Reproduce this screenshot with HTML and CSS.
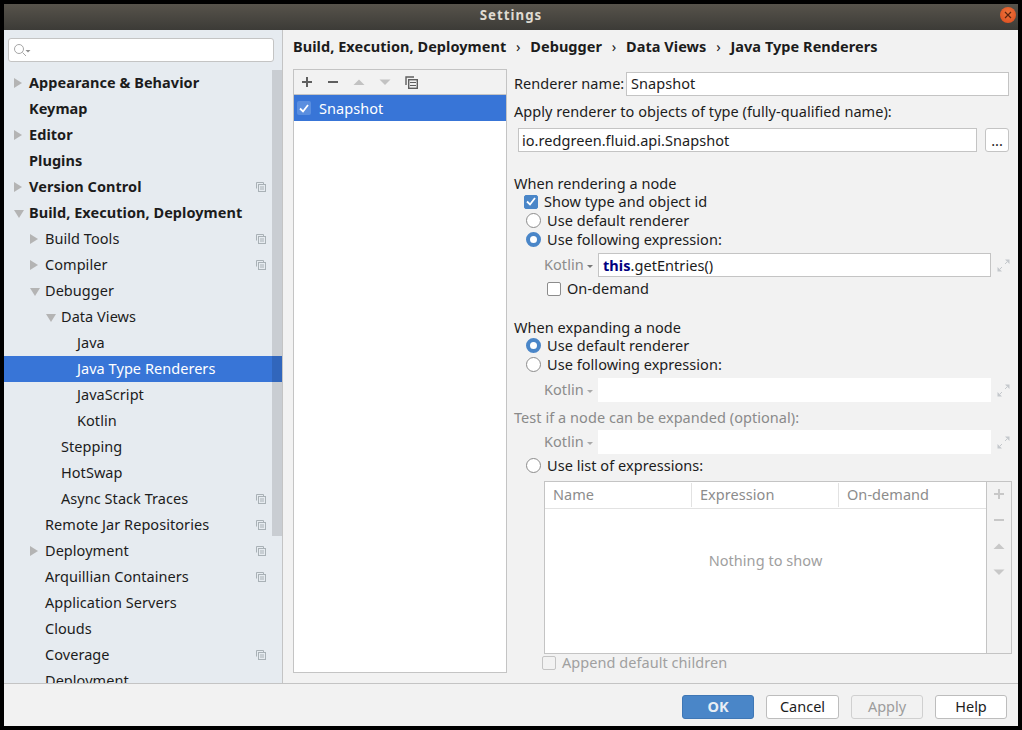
FILE: index.html
```html
<!DOCTYPE html>
<html lang="en">
<head>
    <meta charset="UTF-8">
    <meta name="viewport" content="width=device-width, initial-scale=1.0">
    <title>Settings</title>
    <link rel="stylesheet" href="styles.css">
</head>
<body>
    <svg class="defs" width="0" height="0">
        <symbol id="copy" viewBox="0 0 10 10">
            <path d="M0.5 6.5V0.5H7.5V2" fill="none" stroke="currentColor"/>
            <rect x="2.5" y="2.5" width="7" height="7" fill="none" stroke="currentColor"/>
            <path d="M4 5H8M4 7H8" stroke="currentColor"/>
        </symbol>
        <symbol id="expand" viewBox="0 0 13 13">
            <path d="M8 0.5H12.5V5Z M0.5 8V12.5H5Z" fill="currentColor"/>
            <path d="M8 5L10 3M3 10L5 8" stroke="currentColor"/>
        </symbol>
    </svg>

    <div class="window">
        <div class="titlebar">
            <span class="title">Settings</span>
            <span class="close">
                <svg width="8" height="8" viewBox="0 0 8 8"><path d="M1 1L7 7M7 1L1 7" stroke="#5a2410" stroke-width="1.2"/></svg>
            </span>
        </div>

        <div class="main">
            <!-- left settings tree -->
            <div class="sidebar">
                <div class="search">
                    <svg width="20" height="14" viewBox="0 0 20 14">
                        <circle cx="5" cy="5" r="4.5" fill="none" stroke="#a6a6a6"/>
                        <path d="M8.5 8.5L12 12" stroke="#a6a6a6"/>
                        <path d="M11.5 6H16.5L14 8.5Z" fill="#909090"/>
                    </svg>
                </div>
                <div class="tree">
                    <div class="row lv0 bold"><i class="arrow"></i>Appearance &amp; Behavior</div>
                    <div class="row lv0 bold">Keymap</div>
                    <div class="row lv0 bold"><i class="arrow"></i>Editor</div>
                    <div class="row lv0 bold">Plugins</div>
                    <div class="row lv0 bold"><i class="arrow"></i>Version Control<svg class="copy"><use href="#copy"/></svg></div>
                    <div class="row lv0 bold"><i class="arrow open"></i>Build, Execution, Deployment</div>
                    <div class="row lv1"><i class="arrow"></i>Build Tools<svg class="copy"><use href="#copy"/></svg></div>
                    <div class="row lv1"><i class="arrow"></i>Compiler<svg class="copy"><use href="#copy"/></svg></div>
                    <div class="row lv1"><i class="arrow open"></i>Debugger</div>
                    <div class="row lv2"><i class="arrow open"></i>Data Views</div>
                    <div class="row lv3">Java</div>
                    <div class="row lv3 selected">Java Type Renderers</div>
                    <div class="row lv3">JavaScript</div>
                    <div class="row lv3">Kotlin</div>
                    <div class="row lv2">Stepping</div>
                    <div class="row lv2">HotSwap</div>
                    <div class="row lv2">Async Stack Traces<svg class="copy"><use href="#copy"/></svg></div>
                    <div class="row lv1">Remote Jar Repositories<svg class="copy"><use href="#copy"/></svg></div>
                    <div class="row lv1"><i class="arrow"></i>Deployment<svg class="copy"><use href="#copy"/></svg></div>
                    <div class="row lv1">Arquillian Containers<svg class="copy"><use href="#copy"/></svg></div>
                    <div class="row lv1">Application Servers</div>
                    <div class="row lv1">Clouds</div>
                    <div class="row lv1">Coverage<svg class="copy"><use href="#copy"/></svg></div>
                    <div class="row lv1">Deployment</div>
                </div>
                <div class="scrollbar"></div>
            </div>

            <div class="content">
                <div class="breadcrumb">
                    <span>Build, Execution, Deployment</span><b class="sep">›</b><span>Debugger</span><b class="sep">›</b><span>Data Views</span><b class="sep">›</b><span>Java Type Renderers</span>
                </div>

                <div class="panels">
                    <!-- renderer list -->
                    <div class="list-panel">
                        <div class="list-toolbar">
                            <svg width="12" height="12" viewBox="0 0 12 12"><path d="M6 1V11M1 6H11" stroke="#5f5f5f" stroke-width="2"/></svg>
                            <svg width="12" height="12" viewBox="0 0 12 12"><path d="M1 6H11" stroke="#5f5f5f" stroke-width="2"/></svg>
                            <svg width="12" height="12" viewBox="0 0 12 12"><path d="M0.5 9L6 3.5L11.5 9Z" fill="#c2c2c2"/></svg>
                            <svg width="12" height="12" viewBox="0 0 12 12"><path d="M0.5 3.5L6 9L11.5 3.5Z" fill="#c2c2c2"/></svg>
                            <svg width="13" height="13" viewBox="0 0 13 13">
                                <path d="M1 9V1H9" fill="none" stroke="#5f5f5f" stroke-width="1.4"/>
                                <rect x="3.7" y="3.7" width="8.6" height="8.6" fill="none" stroke="#5f5f5f" stroke-width="1.4"/>
                                <path d="M5 6.5H11M5 9.5H11" stroke="#5f5f5f" stroke-width="1.2"/>
                            </svg>
                        </div>
                        <div class="list-item">
                            <span class="list-check">
                                <svg width="10" height="9" viewBox="0 0 10 9"><path d="M1 4.5L4 7.5L9 1" fill="none" stroke="#fff" stroke-width="1.8"/></svg>
                            </span>
                            Snapshot
                        </div>
                    </div>

                    <!-- renderer form -->
                    <div class="form">
                        <div class="name-row">
                            <label>Renderer name:</label>
                            <div class="input grow">Snapshot</div>
                        </div>
                        <div class="line apply-label">Apply renderer to objects of type (fully-qualified name):</div>
                        <div class="type-row">
                            <div class="input grow">io.redgreen.fluid.api.Snapshot</div>
                            <button class="dots">...</button>
                        </div>

                        <div class="line heading first-heading">When rendering a node</div>
                        <div class="opt box-opt"><i class="box checked"><svg width="10" height="9" viewBox="0 0 10 9"><path d="M1 4.5L4 7.5L9 1" fill="none" stroke="#fff" stroke-width="1.8"/></svg></i>Show type and object id</div>
                        <div class="opt radio-opt"><i class="radio"></i>Use default renderer</div>
                        <div class="opt radio-opt"><i class="radio on"></i>Use following expression:</div>
                        <div class="expr-row">
                            <span class="lang">Kotlin<i class="caret"></i></span>
                            <div class="input grow code"><b>this</b>.getEntries()</div>
                            <svg class="expand"><use href="#expand"/></svg>
                        </div>
                        <div class="opt demand-opt"><i class="box"></i>On-demand</div>

                        <div class="line heading second-heading">When expanding a node</div>
                        <div class="opt radio-opt"><i class="radio on"></i>Use default renderer</div>
                        <div class="opt radio-opt"><i class="radio"></i>Use following expression:</div>
                        <div class="expr-row">
                            <span class="lang off">Kotlin<i class="caret"></i></span>
                            <div class="input grow blank"></div>
                            <svg class="expand"><use href="#expand"/></svg>
                        </div>
                        <div class="line test-label">Test if a node can be expanded (optional):</div>
                        <div class="expr-row tight">
                            <span class="lang off">Kotlin<i class="caret"></i></span>
                            <div class="input grow blank"></div>
                            <svg class="expand"><use href="#expand"/></svg>
                        </div>
                        <div class="opt radio-opt list-opt"><i class="radio"></i>Use list of expressions:</div>

                        <div class="expr-table">
                            <div class="table-main">
                                <div class="table-head">
                                    <span>Name</span><span>Expression</span><span>On-demand</span>
                                </div>
                                <div class="table-empty">Nothing to show</div>
                            </div>
                            <div class="table-tools">
                                <svg width="12" height="12" viewBox="0 0 12 12"><path d="M6 1V11M1 6H11" stroke="#c8c8c8" stroke-width="2"/></svg>
                                <svg width="12" height="12" viewBox="0 0 12 12"><path d="M1 6H11" stroke="#c8c8c8" stroke-width="2"/></svg>
                                <svg width="12" height="12" viewBox="0 0 12 12"><path d="M0.5 9L6 3.5L11.5 9Z" fill="#c8c8c8"/></svg>
                                <svg width="12" height="12" viewBox="0 0 12 12"><path d="M0.5 3.5L6 9L11.5 3.5Z" fill="#c8c8c8"/></svg>
                            </div>
                        </div>
                        <div class="opt append-opt"><i class="box off"></i>Append default children</div>
                    </div>
                </div>
            </div>
        </div>

        <div class="footer">
            <button class="btn primary">OK</button>
            <button class="btn wide">Cancel</button>
            <button class="btn disabled">Apply</button>
            <button class="btn">Help</button>
        </div>
    </div>
</body>
</html>
```

FILE: styles.css
```css
* {
    box-sizing: border-box;
}
html, body {
    margin: 0;
    height: 100%;
}
body {
    padding: 4px;
    background-color: #000;
    font-family: "Noto Sans", "Open Sans", sans-serif;
    font-size: 14.5px;
    letter-spacing: 0.05px;
    color: #1c1c1c;
    overflow: hidden;
}
.defs {
    position: absolute;
}
i {
    font-style: normal;
}
.window {
    display: flex;
    flex-direction: column;
    height: 722px;
    background-color: #f2f2f2;
}

/* title bar */
.titlebar {
    position: relative;
    flex: none;
    height: 26px;
    padding-bottom: 4px;
    display: flex;
    align-items: center;
    justify-content: center;
    background: linear-gradient(#57534b, #3c3b37);
}
.title {
    color: #dfdbd2;
    font-weight: 700;
    font-size: 13.3px;
    letter-spacing: 1px;
}
.close {
    position: absolute;
    right: 2px;
    top: 3px;
    width: 16px;
    height: 16px;
    border-radius: 50%;
    background: radial-gradient(circle at 50% 40%, #f0763c, #d9481c);
    display: flex;
    align-items: center;
    justify-content: center;
}

.main {
    flex: 1;
    display: flex;
    min-height: 0;
}

/* settings tree */
.sidebar {
    position: relative;
    flex: none;
    width: 279px;
    background-color: #e6ebf0;
    border-right: 1px solid #c4c4c4;
    overflow: hidden;
}
.search {
    margin: 8px 8px 8px 4px;
    height: 24px;
    background: #fff;
    border: 1px solid #c4c4c4;
    border-radius: 3px;
    padding: 5px 0 0 5px;
    line-height: 0;
}
.tree {
    height: 613px;
    overflow: hidden;
}
.row {
    position: relative;
    height: 26px;
    line-height: 24px;
    white-space: nowrap;
}
.bold {
    font-weight: 700;
}
.lv0 { padding-left: 25px; }
.lv1 { padding-left: 41px; }
.lv2 { padding-left: 57px; }
.lv3 { padding-left: 73px; }
.selected {
    background-color: #3875d7;
    color: #fff;
}
.arrow {
    position: absolute;
    top: 8px;
    margin-left: -15px;
    width: 0;
    height: 0;
    border-left: 8px solid #b4b4b4;
    border-top: 5px solid transparent;
    border-bottom: 5px solid transparent;
}
.arrow.open {
    top: 10px;
    border-top: 8px solid #b4b4b4;
    border-left: 5px solid transparent;
    border-right: 5px solid transparent;
    border-bottom: 0;
}
.copy {
    position: absolute;
    left: 252px;
    top: 8px;
    width: 10px;
    height: 10px;
    color: #a9b1b6;
}
.scrollbar {
    position: absolute;
    right: 0;
    top: 40px;
    width: 10px;
    height: 466px;
    background-color: rgba(0, 0, 0, 0.125);
}

/* right side */
.content {
    flex: 1;
    min-width: 0;
    padding-left: 10px;
}
.breadcrumb {
    height: 39px;
    padding-top: 3px;
    line-height: 26px;
    font-weight: 700;
    white-space: nowrap;
}
.sep {
    display: inline-block;
    width: 24px;
    text-align: center;
    font-weight: 400;
}
.panels {
    display: flex;
}
.list-panel {
    flex: none;
    width: 214px;
    height: 604px;
    background-color: #fff;
    border: 1px solid #c4c4c4;
}
.list-toolbar {
    height: 25px;
    background-color: #f2f2f2;
    border-bottom: 1px solid #c4c4c4;
    display: flex;
    align-items: center;
    gap: 14px;
    padding-left: 7px;
}
.list-item {
    height: 26px;
    display: flex;
    align-items: center;
    background-color: #3875d7;
    color: #fff;
    padding-left: 3px;
}
.list-check {
    width: 14px;
    height: 14px;
    margin-right: 8px;
    background-color: #5a8edf;
    border-radius: 2px;
    display: flex;
    align-items: center;
    justify-content: center;
}

/* form */
.form {
    flex: 1;
    min-width: 0;
    padding: 3px 6px 0 7px;
}
.input {
    height: 24px;
    line-height: 20px;
    padding-left: 4px;
    background-color: #fff;
    border: 1px solid #c4c4c4;
}
.grow {
    flex: 1;
    min-width: 0;
}
.name-row {
    display: flex;
    align-items: center;
    padding-right: 3px;
}
.name-row label {
    flex: none;
    width: 112px;
    padding-bottom: 2px;
}
.line {
    height: 18px;
    line-height: 16px;
}
.apply-label {
    height: 20px;
    line-height: 18px;
    margin-top: 6px;
}
.type-row {
    display: flex;
    gap: 8px;
    margin-top: 6px;
    padding: 0 3px 0 4px;
}
.type-row .input {
    line-height: 22px;
    padding-left: 3px;
}
.dots {
    flex: none;
    width: 24px;
    height: 24px;
    padding: 0;
    background-color: #fff;
    border: 1px solid #c4c4c4;
    border-radius: 3px;
    font: inherit;
    color: inherit;
}
.first-heading {
    margin-top: 23px;
}
.second-heading {
    margin-top: 20px;
}
.opt {
    display: flex;
    align-items: center;
    height: 19px;
    padding-bottom: 4px;
    white-space: nowrap;
}
.box {
    flex: none;
    width: 14px;
    height: 14px;
    margin: 2px 6px 0 0;
    background-color: #fff;
    border: 1px solid #8c8c8c;
    border-radius: 2px;
    display: flex;
    align-items: center;
    justify-content: center;
}
.box.checked {
    background-color: #4a86c8;
    border-color: #4a86c8;
}
.box.off {
    background-color: transparent;
    border-color: #c4c4c4;
}
.box-opt {
    padding-left: 10px;
}
.radio {
    flex: none;
    width: 15px;
    height: 15px;
    margin: 2px 6px 0 0;
    background-color: #fff;
    border: 1px solid #8c8c8c;
    border-radius: 50%;
}
.radio.on {
    border: 4.5px solid #4a86c8;
}
.radio-opt {
    padding-left: 12px;
}
.expr-row {
    display: flex;
    align-items: center;
    margin-top: 3px;
    padding-left: 30px;
    height: 24px;
}
.expr-row.tight {
    margin-top: 2px;
}
.lang {
    flex: none;
    width: 54px;
    padding-bottom: 2px;
    color: #8c8c8c;
}
.caret {
    display: inline-block;
    margin-left: 3px;
    vertical-align: 2px;
    border-top: 3px solid #777;
    border-left: 3px solid transparent;
    border-right: 3px solid transparent;
}
.lang.off .caret {
    border-top-color: #aaa;
}
.code {
    line-height: 22px;
}
.code b {
    color: #000080;
}
.blank {
    border-color: #fff;
}
.expand {
    flex: none;
    width: 13px;
    height: 13px;
    margin: 0 2px 0 6px;
    color: #c4c8cc;
}
.demand-opt {
    margin-top: 2px;
    height: 20px;
    padding-bottom: 2px;
    padding-left: 33px;
}
.test-label {
    height: 20px;
    line-height: 18px;
    margin-top: 6px;
    color: #8a8a8a;
}
.list-opt {
    margin-top: 3px;
}
.expr-table {
    display: flex;
    margin: 5px 0 0 30px;
    height: 173px;
    background-color: #fff;
    border: 1px solid #c4c4c4;
}
.table-main {
    flex: 1;
    min-width: 0;
    display: flex;
    flex-direction: column;
}
.table-head {
    flex: none;
    display: grid;
    grid-template-columns: 147px 147px 1fr;
    height: 27px;
    border-bottom: 1px solid #e2e2e2;
    color: #8c8c8c;
}
.table-head span {
    margin: 1px 0;
    padding-left: 8px;
    line-height: 22px;
    border-right: 1px solid #e2e2e2;
}
.table-head span:last-child {
    border-right: 0;
}
.table-empty {
    flex: 1;
    display: flex;
    align-items: center;
    justify-content: center;
    padding-bottom: 42px;
    color: #a0a0a0;
}
.table-tools {
    flex: none;
    width: 25px;
    background-color: #f2f2f2;
    border-left: 1px solid #c4c4c4;
    display: flex;
    flex-direction: column;
    align-items: center;
    gap: 14px;
    padding-top: 6px;
}
.append-opt {
    padding-left: 28px;
    color: #a0a0a0;
}

/* footer buttons */
.footer {
    flex: none;
    height: 43px;
    border-top: 1px solid #c4c4c4;
    display: flex;
    justify-content: flex-end;
    gap: 12px;
    padding: 11px 11px 0 0;
}
.btn {
    width: 72px;
    height: 24px;
    padding: 0 0 2px;
    font: inherit;
    color: #1c1c1c;
    background-color: #fff;
    border: 1px solid #bdbdbd;
    border-radius: 3px;
}
.btn.wide {
    width: 73px;
}
.btn.primary {
    background-color: #4a86c8;
    border-color: #3f77b5;
    color: #e8eef5;
    font-weight: 700;
}
.btn.disabled {
    background-color: #f2f2f2;
    border-color: #d0d0d0;
    color: #9c9c9c;
}
```
